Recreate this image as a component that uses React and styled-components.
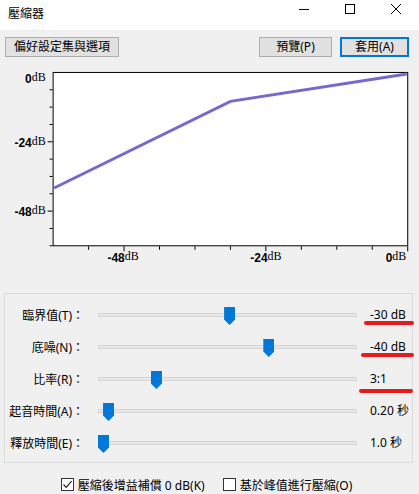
import React from "react";
import styled, { createGlobalStyle } from "styled-components";

const GlobalStyle = createGlobalStyle`
  html, body {
    margin: 0;
    padding: 0;
    background: #f0f0f0;
  }
  body {
    font-family: "Noto Sans", "Noto Sans CJK TC", sans-serif;
    font-size: 12px;
    color: #000;
  }
`;

const sliders = [
  { label: "臨界值(T)：", value: -30, min: -60, max: -1, text: "-30 dB", mark: { left: -6, width: 50, top: 22 } },
  { label: "底噪(N)：", value: -40, min: -80, max: -20, text: "-40 dB", mark: { left: -9, width: 53, top: 22 } },
  { label: "比率(R)：", value: 3, min: 1.1, max: 10, text: "3:1", mark: { left: -11, width: 54, top: 26 } },
  { label: "起音時間(A)：", value: 0.2, min: 0.1, max: 5, text: "0.20 秒" },
  { label: "釋放時間(E)：", value: 1, min: 1, max: 30, text: "1.0 秒" },
];

const TRACK = 259;
const THUMB = 11;

// graph geometry (svg coords)
const gx = (db) => 52.5 + ((db + 60) / 60) * 356;
const gy = (db) => 10.5 + (-db / 60) * 174;

const Graph = () => {
  const leftTicks = Array.from({ length: 10 }, (_, i) => -6 * (i + 1));
  const bottomTicks = Array.from({ length: 10 }, (_, i) => -54 + 6 * i);
  return (
    <GraphSvg width="419" height="226" viewBox="0 0 419 226">
      <rect x="52.5" y="10.5" width="356" height="174" fill="#fff" stroke="#000" />
      {leftTicks.map((d) => (
        <line
          key={d}
          x1={d % 24 === 0 ? 47 : 49}
          x2="52"
          y1={gy(d)}
          y2={gy(d)}
          stroke="#000"
        />
      ))}
      {bottomTicks.map((d) => (
        <line
          key={d}
          x1={gx(d)}
          x2={gx(d)}
          y1="185"
          y2={d % 24 === 0 ? 190 : 188.5}
          stroke="#000"
        />
      ))}
      <polyline
        points={`${gx(-60) + 1},${gy(-40)} ${gx(-30)},${gy(-10)} ${gx(0) - 1},${gy(0) + 1.5}`}
        fill="none"
        stroke="#7568cf"
        strokeWidth="3"
      />
      <AxisText x="45" y="21.5" textAnchor="end">
        <tspan>0</tspan>
        <DbSpan dy="-2">dB</DbSpan>
      </AxisText>
      <AxisText x="45" y="85" textAnchor="end">
        <tspan>-24</tspan>
        <DbSpan dy="-2">dB</DbSpan>
      </AxisText>
      <AxisText x="45" y="155" textAnchor="end">
        <tspan>-48</tspan>
        <DbSpan dy="-2">dB</DbSpan>
      </AxisText>
      <AxisText x={gx(-48) - 1} y="200.5" textAnchor="middle">
        <tspan>-48</tspan>
        <DbSpan dy="-2">dB</DbSpan>
      </AxisText>
      <AxisText x={gx(-24)} y="200.5" textAnchor="middle">
        <tspan>-24</tspan>
        <DbSpan dy="-2">dB</DbSpan>
      </AxisText>
      <AxisText x="407" y="200.5" textAnchor="end">
        <tspan>0</tspan>
        <DbSpan dy="-2">dB</DbSpan>
      </AxisText>
    </GraphSvg>
  );
};

const CheckIcon = () => (
  <svg width="11" height="11" viewBox="0 0 11 11">
    <polyline points="1.5,5.5 4.2,8.3 9.6,2.2" fill="none" stroke="#222" strokeWidth="1.2" />
  </svg>
);

const App = () => {
  return (
    <Window>
      <GlobalStyle />
      <TitleBar>
        <Title>壓縮器</Title>
        <Controls>
          <ControlButton>
            <svg width="10" height="10" viewBox="0 0 10 10">
              <line x1="0" x2="10" y1="5.5" y2="5.5" stroke="#000" />
            </svg>
          </ControlButton>
          <ControlButton>
            <svg width="10" height="10" viewBox="0 0 10 10">
              <rect x="0.5" y="0.5" width="9" height="9" fill="none" stroke="#000" />
            </svg>
          </ControlButton>
          <ControlButton>
            <svg width="10" height="10" viewBox="0 0 10 10">
              <line x1="0" y1="0" x2="10" y2="10" stroke="#000" />
              <line x1="10" y1="0" x2="0" y2="10" stroke="#000" />
            </svg>
          </ControlButton>
        </Controls>
      </TitleBar>

      <Toolbar>
        <Button $width={114}>偏好設定集與選項</Button>
        <Spacer />
        <Button $width={73}>預覽(P)</Button>
        <Button $width={69} $primary>
          套用(A)
        </Button>
      </Toolbar>

      <Graph />

      <GroupBox>
        {sliders.map((s) => {
          const frac = (s.value - s.min) / (s.max - s.min);
          const center = THUMB / 2 + frac * (TRACK - THUMB);
          return (
            <Row key={s.label}>
              <Label>{s.label}</Label>
              <Slider>
                <Track />
                <Thumb style={{ left: center - THUMB / 2 }} />
              </Slider>
              <Value>
                {s.text}
                {s.mark && <Mark $left={s.mark.left} $width={s.mark.width} $top={s.mark.top} />}
              </Value>
            </Row>
          );
        })}
      </GroupBox>

      <CheckRow>
        <CheckItem>
          <Box>
            <CheckIcon />
          </Box>
          壓縮後增益補償 0 dB(K)
        </CheckItem>
        <CheckItem>
          <Box />
          基於峰值進行壓縮(O)
        </CheckItem>
      </CheckRow>
    </Window>
  );
};

export default App;

const Window = styled.div`
  width: 419px;
  height: 494px;
  background: #f0f0f0;
  display: flex;
  flex-direction: column;
  overflow: hidden;
`;

const TitleBar = styled.div`
  height: 30px;
  background: #fff;
  display: flex;
  align-items: center;
`;

const Title = styled.div`
  flex: 1;
  padding-left: 8px;
  font-size: 12px;
  margin-top: -3px;
`;

const Controls = styled.div`
  display: flex;
  height: 100%;
`;

const ControlButton = styled.div`
  width: 46px;
  height: 100%;
  display: flex;
  align-items: center;
  justify-content: center;
  margin-top: -6px;
`;

const Toolbar = styled.div`
  display: flex;
  align-items: center;
  gap: 8px;
  padding: 7px 10px 0 5px;
  height: 20px;
`;

const Spacer = styled.div`
  flex: 1;
`;

const Button = styled.div`
  box-sizing: border-box;
  width: ${({ $width }) => $width}px;
  height: 20px;
  display: flex;
  align-items: center;
  justify-content: center;
  background: #e1e1e1;
  border: ${({ $primary }) => ($primary ? "2px solid #0078d7" : "1px solid #adadad")};
  font-size: 12px;
  line-height: 1;
`;

const GraphSvg = styled.svg`
  display: block;
  margin-top: 5px;
`;

const AxisText = styled.text`
  font-family: "Liberation Sans", sans-serif;
  font-weight: bold;
  font-size: 12px;
  fill: #000;
`;

const DbSpan = styled.tspan`
  font-family: "Liberation Serif", serif;
  font-weight: normal;
  font-size: 12px;
`;

const GroupBox = styled.div`
  box-sizing: border-box;
  margin: 6px 6px 0 4px;
  border: 1px solid #dcdcdc;
  padding: 5px 0 3px 0;
  display: flex;
  flex-direction: column;
`;

const Row = styled.div`
  display: flex;
  align-items: center;
  height: 32px;
`;

const Label = styled.div`
  width: 79px;
  text-align: right;
  white-space: nowrap;
`;

const Slider = styled.div`
  position: relative;
  width: ${TRACK}px;
  height: 32px;
  margin-left: 14px;
  display: flex;
  align-items: center;
`;

const Track = styled.div`
  box-sizing: border-box;
  width: 100%;
  height: 4px;
  background: #e7e7e7;
  border: 1px solid #d6d6d6;
`;

const Thumb = styled.div`
  position: absolute;
  top: 8px;
  width: ${THUMB}px;
  height: 18px;
  background: #0078d7;
  clip-path: polygon(0 0, 100% 0, 100% 70%, 50% 100%, 0 70%);
`;

const Value = styled.div`
  position: relative;
  margin-left: 13px;
  height: 32px;
  line-height: 32px;
  white-space: nowrap;
`;

const Mark = styled.span`
  position: absolute;
  left: ${({ $left }) => $left}px;
  top: ${({ $top }) => $top}px;
  width: ${({ $width }) => $width}px;
  height: 4px;
  border-radius: 2px;
  background: #e41b1b;
`;

const CheckRow = styled.div`
  display: flex;
  justify-content: center;
  gap: 18px;
  margin-top: 13px;
  padding-right: 6px;
`;

const CheckItem = styled.div`
  display: flex;
  align-items: center;
  gap: 4px;
  white-space: nowrap;
`;

const Box = styled.div`
  box-sizing: border-box;
  width: 13px;
  height: 13px;
  border: 1px solid #333;
  background: #fff;
  display: flex;
  align-items: center;
  justify-content: center;
`;
